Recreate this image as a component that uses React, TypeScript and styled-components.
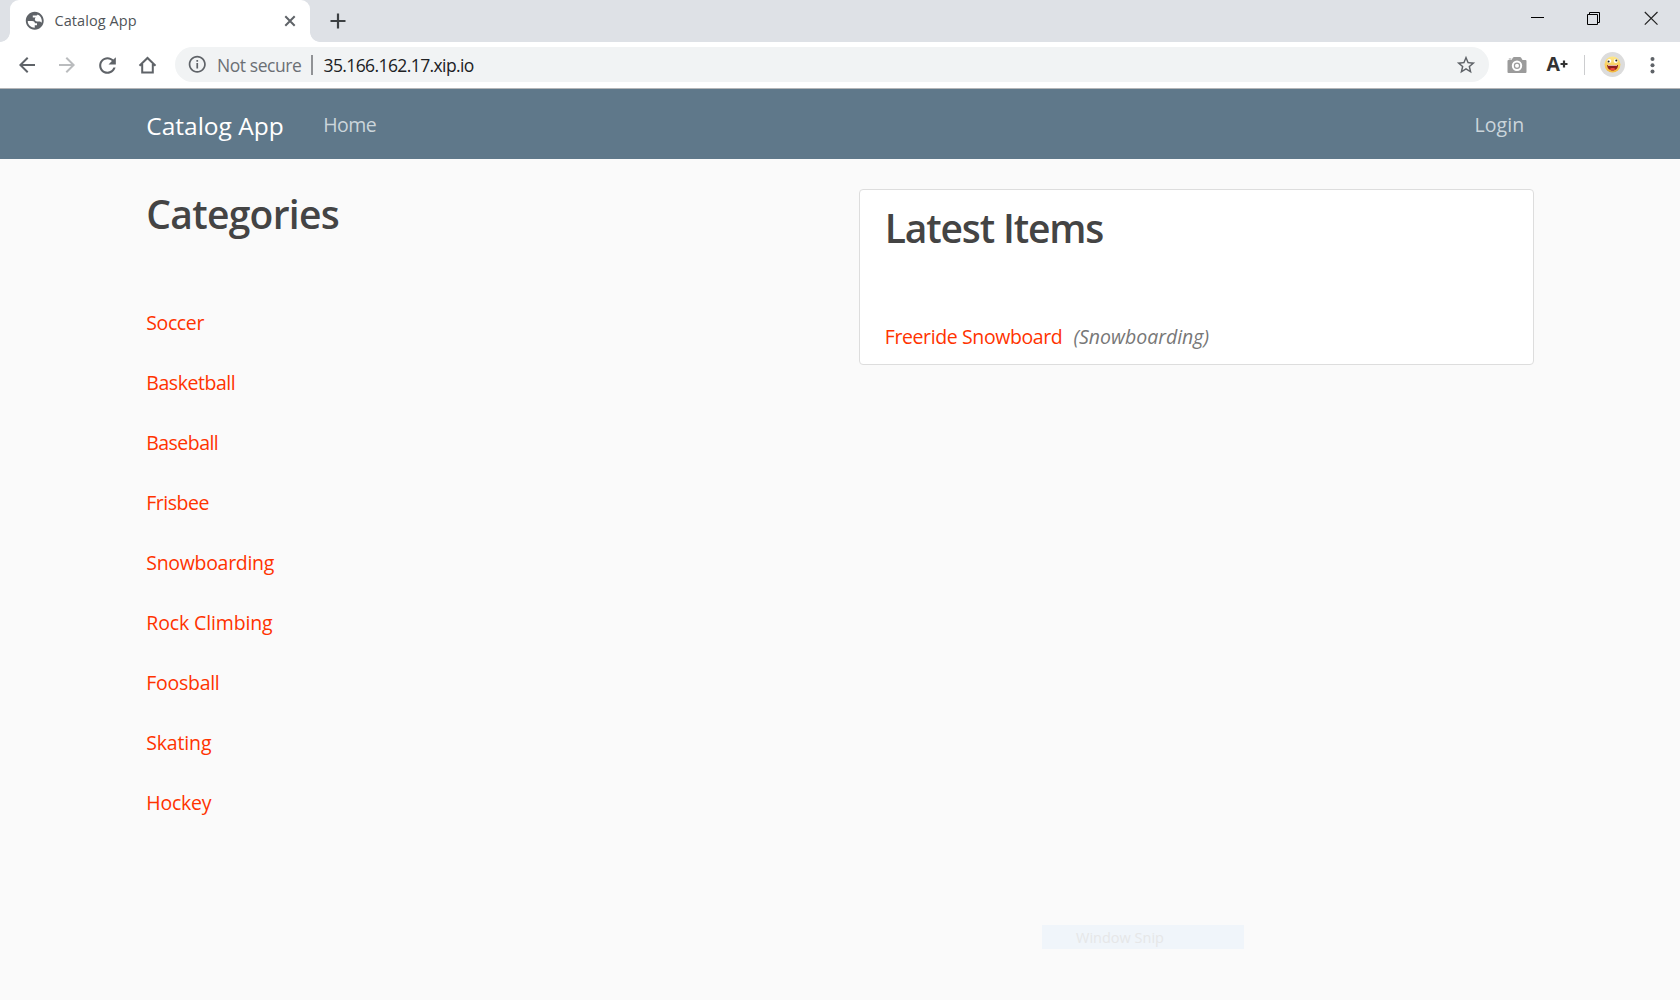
import React from "react";
import styled, { createGlobalStyle } from "styled-components";

const GlobalStyle = createGlobalStyle`
  *, *::before, *::after { box-sizing: border-box; }
  body {
    margin: 0;
    background: #fafafa;
    color: #333;
    font-family: "Segoe UI", "Open Sans", "Noto Sans", sans-serif;
    overflow: hidden;
  }
  svg { display: block; flex: none; }
`;

const Window = styled.div`
  position: relative;
  width: 1680px;
  height: 1000px;
  display: flex;
  flex-direction: column;
  overflow: hidden;
`;

const TabStrip = styled.header`
  height: 42px;
  display: flex;
  background: #dee1e6;
`;

const TabFoot = styled.div<{ $side: "left" | "right" }>`
  width: 10px;
  display: flex;
  align-items: flex-end;
  &::after {
    content: "";
    width: 10px;
    height: 10px;
    background: ${(p) =>
      `radial-gradient(circle at ${p.$side === "left" ? "0 0" : "100% 0"}, #dee1e6 9.5px, #fff 10.2px)`};
  }
`;

const Tab = styled.div`
  width: 300px;
  height: 42px;
  padding: 0 13px 0 14px;
  display: flex;
  align-items: center;
  background: #fff;
  border-radius: 9px 9px 0 0;
`;

const TabTitle = styled.span`
  flex: 1;
  margin-left: 9px;
  font-size: 14.5px;
  line-height: 20px;
  letter-spacing: 0.08px;
  color: #505458;
`;

const NewTab = styled.div`
  flex: 1;
  padding: 13px 0 0 9.5px;
`;

const WindowControls = styled.div`
  display: flex;
  gap: 43px;
  padding: 11px 22px 0 0;
`;

const Toolbar = styled.div`
  height: 47px;
  padding: 0 15px 1px 15px;
  display: flex;
  align-items: center;
  background: #fff;
  border-bottom: 1px solid #b4b5b7;
`;

const NavButtons = styled.div`
  display: flex;
  gap: 16px;
  margin-right: 15px;
  padding-top: 1px;
`;

const AddressBar = styled.div`
  width: 1314px;
  height: 35px;
  padding: 0 12px 0 12px;
  display: flex;
  align-items: center;
  border-radius: 17.5px;
  background: #f1f3f4;
  font-size: 17.5px;
  line-height: 34px;
`;

const SecurityLabel = styled.span`
  width: 103px;
  padding-left: 9.5px;
  color: #6b6f74;
  letter-spacing: -0.43px;
  white-space: nowrap;
`;

const Separator = styled.span<{ $color: string; $width: number }>`
  width: ${(p) => p.$width}px;
  height: 20px;
  background: ${(p) => p.$color};
`;

const Url = styled.span`
  flex: 1;
  padding-left: 11px;
  letter-spacing: -0.6px;
  color: #202124;
`;

const Extensions = styled.div`
  flex: 1;
  display: flex;
  align-items: center;
  padding-left: 17.5px;
`;

const FontExtension = styled.span`
  width: 57px;
  padding: 0 0 1px 20px;
  display: flex;
  align-items: center;
  font: 700 19.5px/24px "Open Sans", sans-serif;
  color: #333;
`;

const Avatar = styled.div`
  width: 25px;
  height: 25px;
  margin: 0 15px 0 15.5px;
  display: grid;
  place-items: center;
  border-radius: 50%;
  background: #dcdcdc;
`;

const SiteHeader = styled.nav`
  height: 70px;
  background: #5f788a;
`;

const NavRow = styled.div`
  width: 1425px;
  height: 70px;
  margin: 0 auto;
  padding: 2px 18.75px 0;
  display: flex;
  align-items: center;
`;

const Brand = styled.a`
  width: 177px;
  padding-top: 2px;
  font-size: 24.5px;
  line-height: 36px;
  color: #fff;
`;

const NavLink = styled.a<{ $spacing: number; $end?: boolean }>`
  margin-left: ${(p) => (p.$end ? "auto" : "0")};
  padding-right: 9.5px;
  font-size: 19.5px;
  line-height: 30px;
  letter-spacing: ${(p) => p.$spacing}px;
  color: #cbd5db;
`;

const Main = styled.main`
  width: 1425px;
  margin: 30px auto 0;
  padding: 0 18.75px;
  display: grid;
  grid-template-columns: 1fr 1fr;
  gap: 37.5px;
  align-items: start;
`;

const Column = styled.section`
  min-width: 0;
`;

const Card = styled(Column)`
  height: 176px;
  padding: 13px 25px;
  border: 1px solid #ddd;
  border-radius: 4px;
  background: #fff;
`;

const Heading = styled.h1<{ $spacing: number }>`
  margin: 0 0 70px;
  padding-top: 1px;
  font-size: 39px;
  font-weight: 600;
  line-height: 48px;
  letter-spacing: ${(p) => p.$spacing}px;
  color: #444;
`;

const CategoryList = styled.div`
  display: flex;
  flex-direction: column;
  gap: 30px;
`;

const ItemLink = styled.a<{ $spacing: number }>`
  font-size: 19.5px;
  line-height: 30px;
  letter-spacing: ${(p) => p.$spacing}px;
  color: #ff3300;
`;

const ItemRow = styled.div`
  display: flex;
  gap: 11px;
`;

const ItemCategory = styled.em`
  font-size: 19.5px;
  line-height: 30px;
  color: #777;
`;

const SnipLabel = styled.div`
  position: absolute;
  left: 1042px;
  top: 925px;
  width: 202px;
  height: 24px;
  padding: 1px 0 0 34px;
  background: #f0f5fa;
  font-size: 14.5px;
  line-height: 24px;
  color: #e6e7e8;
`;

const categories = [
  { name: "Soccer", spacing: -0.38 },
  { name: "Basketball", spacing: -0.44 },
  { name: "Baseball", spacing: -0.54 },
  { name: "Frisbee", spacing: -0.5 },
  { name: "Snowboarding", spacing: -0.3 },
  { name: "Rock Climbing", spacing: -0.13 },
  { name: "Foosball", spacing: -0.27 },
  { name: "Skating", spacing: -0.16 },
  { name: "Hockey", spacing: -0.24 },
];

const MaterialIcon = ({ d, size = 24, color = "#5f6368" }: { d: string; size?: number; color?: string }) => (
  <svg width={size} height={size} viewBox="0 0 24 24" fill={color}>
    <path d={d} />
  </svg>
);

const globe =
  "M12 2C6.48 2 2 6.48 2 12s4.480 10 10 10 10-4.480 10-10S17.520 2 12 2zM4.200 12.200L9 12.300c2.200.1 3.200 1 3.200 2.600h2.300v2.200h-2.500v2.600C7.600 19.700 4.200 16.500 4.200 12.200zM15.200 4.900c2.800 1.200 4.700 4 4.700 7.200 0 .8-.1 1.500-.3 2.100-.7-1-1.500-1.500-2.600-1.500h-2.400c-1.500 0-2.500-1-2.500-2.500 0-.9.400-1.500 1-1.900H9.800V6.100h3.300c1.200 0 1.900-.4 2.100-1.200z";

const Smiley = () => (
  <svg width="17" height="17" viewBox="0 0 17 17">
    <defs>
      <linearGradient id="face" x1="0" y1="0" x2="0" y2="1">
        <stop offset="0" stopColor="#ffe98a" />
        <stop offset="1" stopColor="#f3b73b" />
      </linearGradient>
    </defs>
    <circle cx="8.500" cy="8.500" r="8" fill="url(#face)" />
    <ellipse cx="5.300" cy="5" rx="2" ry="2" fill="#fff" />
    <ellipse cx="11.700" cy="5" rx="2" ry="2" fill="#fff" />
    <circle cx="4.600" cy="5.400" r="1" fill="#222" />
    <circle cx="12.300" cy="4.500" r="1" fill="#222" />
    <path d="M3.200 9h10.800c0 3.300-2.200 5.500-5.400 5.500S3.200 12.200 3.200 9z" fill="#8d1d1d" />
    <path d="M4 9.200h9v.8H4z" fill="#f5dcc8" />
    <path d="M5.500 13.200c1.400-1.500 4.800-1.500 6.200 0-1.700 1.400-4.500 1.400-6.200 0z" fill="#f0473c" />
  </svg>
);

export default function App() {
  return (
    <Window>
      <GlobalStyle />
      <TabStrip>
        <TabFoot $side="left" />
        <Tab>
          <MaterialIcon size={21.5} d={globe} />
          <TabTitle>Catalog App</TabTitle>
          <svg width="14" height="14" viewBox="0 0 14 14" stroke="#5f6368" strokeWidth="2">
            <path d="M2.300 2.300l9.400 9.400M11.700 2.300l-9.400 9.400" />
          </svg>
        </Tab>
        <TabFoot $side="right" />
        <NewTab>
          <svg width="16" height="16" viewBox="0 0 16 16" stroke="#3c4043" strokeWidth="2.200">
            <path d="M8 .5v15M.5 8h15" />
          </svg>
        </NewTab>
        <WindowControls>
          <svg width="14" height="16" viewBox="0 0 14 16" stroke="#000" shapeRendering="crispEdges">
            <path d="M.5 6.500h13" />
          </svg>
          <svg width="14" height="16" viewBox="0 0 14 16" stroke="#000" fill="none">
            <path d="M.5 3.500h10v10H.5zM2.500 3.500v-2h10v10h-2" />
          </svg>
          <svg width="14" height="16" viewBox="0 0 14 16" stroke="#222" strokeWidth="1.200">
            <path d="M.8 1l12.700 12.700M13.500 1L.8 13.700" />
          </svg>
        </WindowControls>
      </TabStrip>

      <Toolbar>
        <NavButtons>
          <MaterialIcon d="M20 11H7.830l5.590-5.590L12 4l-8 8 8 8 1.410-1.410L7.830 13H20v-2z" />
          <MaterialIcon color="#babcbe" d="M12 4l-1.410 1.410L16.170 11H4v2h12.170l-5.580 5.590L12 20l8-8z" />
          <MaterialIcon
            size={25}
            d="M17.650 6.350C16.200 4.900 14.210 4 12 4c-4.420 0-7.990 3.580-7.990 8s3.570 8 7.990 8c3.730 0 6.840-2.550 7.730-6h-2.080c-.82 2.330-3.040 4-5.650 4-3.310 0-6-2.690-6-6s2.690-6 6-6c1.660 0 3.140.69 4.220 1.780L13 11h7V4l-2.350 2.350z"
          />
          <svg width="24" height="24" viewBox="0 0 24 24" fill="none" stroke="#5f6368" strokeWidth="2">
            <path d="M3.500 12.700L11.500 5l8 7.700M6.200 11v8.500h10.600V11" />
          </svg>
        </NavButtons>
        <AddressBar>
          <MaterialIcon
            size={20.5}
            d="M11 10.500h2V17h-2zM11 7h2v2h-2zM12 2C6.480 2 2 6.480 2 12s4.480 10 10 10 10-4.480 10-10S17.520 2 12 2zm0 18c-4.410 0-8-3.590-8-8s3.590-8 8-8 8 3.590 8 8-3.590 8-8 8z"
          />
          <SecurityLabel>Not secure</SecurityLabel>
          <Separator $color="#909295" $width={2} />
          <Url>35.166.162.17.xip.io</Url>
          <MaterialIcon
            size={22}
            d="M22 9.240l-7.190-.62L12 2 9.190 8.630 2 9.240l5.460 4.730L5.820 21 12 17.270 18.180 21l-1.630-7.030L22 9.240zM12 15.400l-3.760 2.270 1-4.280-3.320-2.880 4.380-.38L12 6.100l1.710 4.040 4.380.38-3.320 2.880 1 4.280L12 15.400z"
          />
        </AddressBar>
        <Extensions>
          <svg width="20" height="18" viewBox="0 0 20 18">
            <path d="M1.500 4h3L6 1.500Q6.500 1 7 1h6q.5 0 1 .5L15.500 4h3Q19.500 4 19.500 5v11q0 1-1 1h-17q-1 0-1-1V5q0-1 1-1zM1.800 2.400h2.500v1H1.800z" fill="#9b9b9b" />
            <circle cx="10" cy="9.700" r="4.200" fill="#9b9b9b" stroke="#fff" strokeWidth="2" />
            <circle cx="10" cy="9.700" r="2" fill="#fff" />
          </svg>
          <FontExtension>
            A
            <svg width="8" height="8" viewBox="0 0 8 8" stroke="#333" strokeWidth="2.200">
              <path d="M4 .5v7M.5 4h7" />
            </svg>
          </FontExtension>
          <Separator $color="#cccdcf" $width={1} />
          <Avatar>
            <Smiley />
          </Avatar>
          <svg width="24" height="24" viewBox="0 0 24 24" fill="#5f6368">
            <circle cx="12.500" cy="6" r="2" />
            <circle cx="12.500" cy="12.200" r="2" />
            <circle cx="12.500" cy="18.400" r="2" />
          </svg>
        </Extensions>
      </Toolbar>

      <SiteHeader>
        <NavRow>
          <Brand>Catalog App</Brand>
          <NavLink $spacing={-0.55}>Home</NavLink>
          <NavLink $spacing={0.05} $end>Login</NavLink>
        </NavRow>
      </SiteHeader>

      <Main>
        <Column>
          <Heading $spacing={-0.7}>Categories</Heading>
          <CategoryList>
            {categories.map((c) => (
              <ItemLink key={c.name} $spacing={c.spacing}>{c.name}</ItemLink>
            ))}
          </CategoryList>
        </Column>
        <Card>
          <Heading $spacing={-1.15}>Latest Items</Heading>
          <ItemRow>
            <ItemLink $spacing={-0.39}>Freeride Snowboard</ItemLink>
            <ItemCategory>(Snowboarding)</ItemCategory>
          </ItemRow>
        </Card>
      </Main>

      <SnipLabel>Window Snip</SnipLabel>
    </Window>
  );
}
